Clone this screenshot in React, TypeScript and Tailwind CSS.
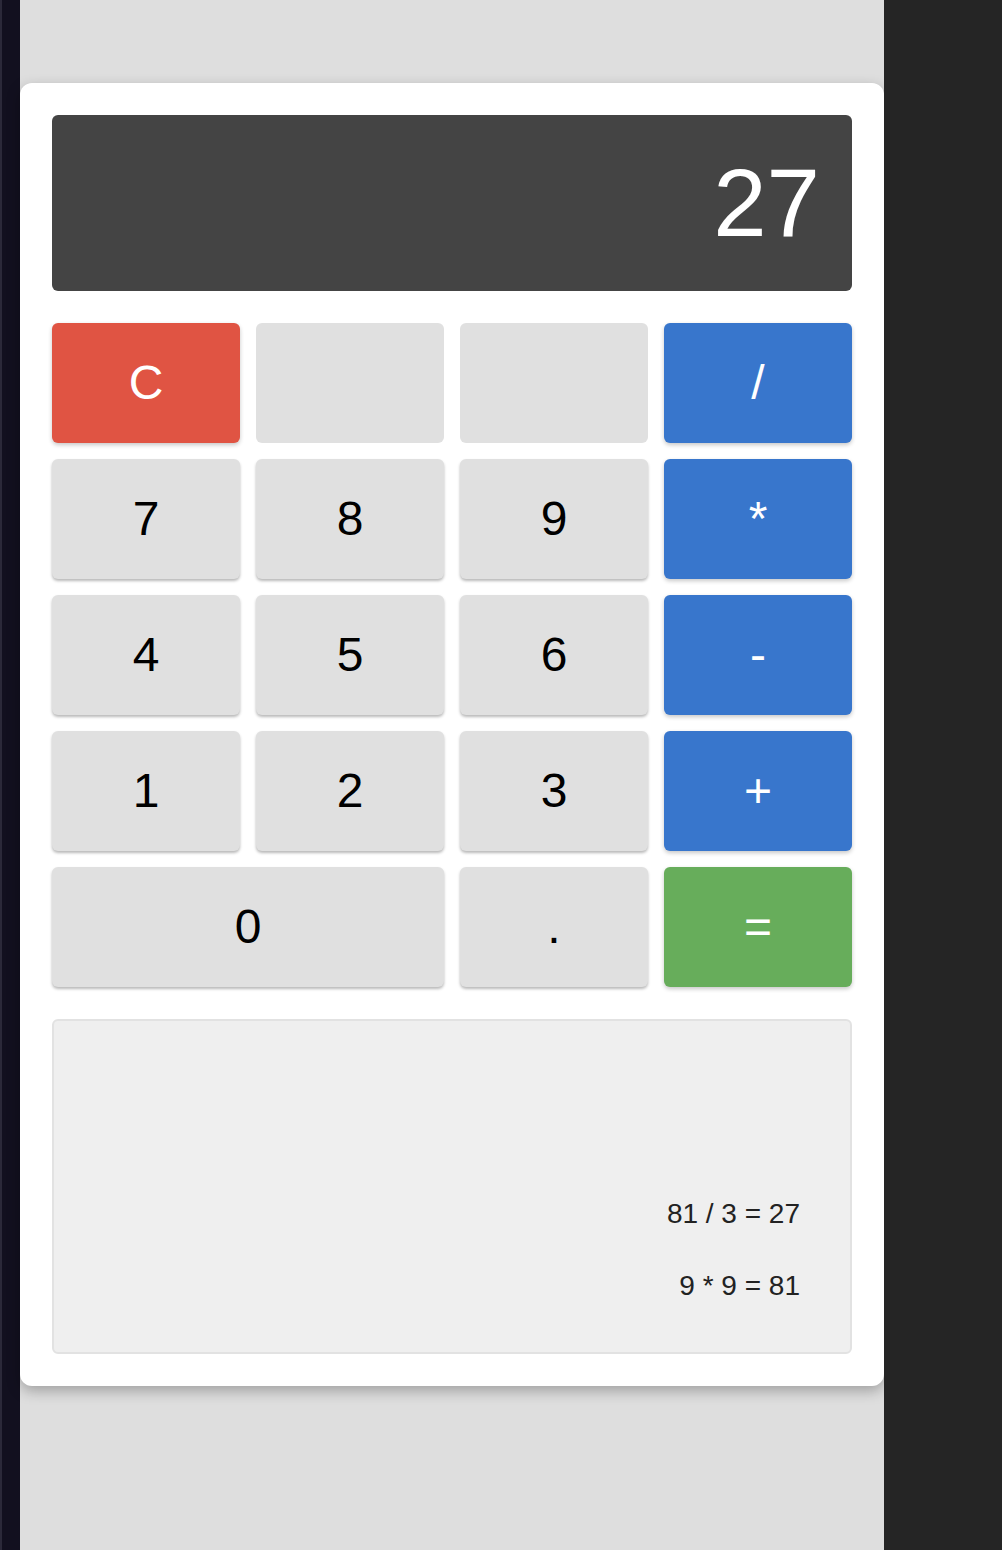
import React from "react";

type Key = {
  label: string;
  kind: "num" | "blank" | "clear" | "op" | "eq";
  wide?: boolean;
};

const keys: Key[] = [
  { label: "C", kind: "clear" },
  { label: "", kind: "blank" },
  { label: "", kind: "blank" },
  { label: "/", kind: "op" },
  { label: "7", kind: "num" },
  { label: "8", kind: "num" },
  { label: "9", kind: "num" },
  { label: "*", kind: "op" },
  { label: "4", kind: "num" },
  { label: "5", kind: "num" },
  { label: "6", kind: "num" },
  { label: "-", kind: "op" },
  { label: "1", kind: "num" },
  { label: "2", kind: "num" },
  { label: "3", kind: "num" },
  { label: "+", kind: "op" },
  { label: "0", kind: "num", wide: true },
  { label: ".", kind: "num" },
  { label: "=", kind: "eq" },
];

const kindClass: Record<Key["kind"], string> = {
  num: "bg-[#e0e0e0] text-black shadow-[0_2px_3px_rgba(0,0,0,0.28)]",
  blank: "bg-[#e0e0e0]",
  clear: "bg-[#e05443] text-white shadow-[0_2px_4px_rgba(0,0,0,0.22)]",
  op: "bg-[#3876cc] text-white shadow-[0_2px_4px_rgba(0,0,0,0.22)]",
  eq: "bg-[#67ad5b] text-white shadow-[0_2px_4px_rgba(0,0,0,0.22)]",
};

const history = ["81 / 3 = 27", "9 * 9 = 81"];

export default function App() {
  return (
    <div
      className="flex min-h-[1550px] w-full"
      style={{ fontFamily: '"Liberation Sans", Arial, sans-serif' }}
    >
      {/* left editor edge */}
      <div className="w-[20px] shrink-0 border-l-2 border-[#2b2939] bg-[#12101f]" />

      {/* page column */}
      <div className="w-[864px] shrink-0 bg-[#dedede] pt-[83px]">
        <div className="rounded-xl bg-white p-8 shadow-[0_5px_14px_rgba(0,0,0,0.28)]">
          {/* Display */}
          <div className="flex h-[176px] items-center justify-end rounded-md bg-[#444444] pr-8 text-[96px] leading-none text-white">
            27
          </div>

          {/* Keypad */}
          <div className="mt-8 grid grid-cols-4 gap-4">
            {keys.map((k, i) => (
              <button
                key={i}
                className={`flex h-[120px] items-center justify-center rounded-md text-[48px] leading-none ${kindClass[k.kind]} ${k.wide ? "col-span-2" : ""}`}
              >
                {k.label}
              </button>
            ))}
          </div>

          {/* History */}
          <div className="mt-8 flex h-[335px] flex-col items-end justify-end gap-[30px] rounded-md border-2 border-[#e2e2e2] bg-[#efefef] pb-[45px] pr-[50px] text-[28px] leading-[42px] text-[#222]">
            {history.map((h) => (
              <div key={h}>{h}</div>
            ))}
          </div>
        </div>
      </div>

      {/* right dark panel */}
      <div className="flex-1 bg-[#252525]" />
    </div>
  );
}
